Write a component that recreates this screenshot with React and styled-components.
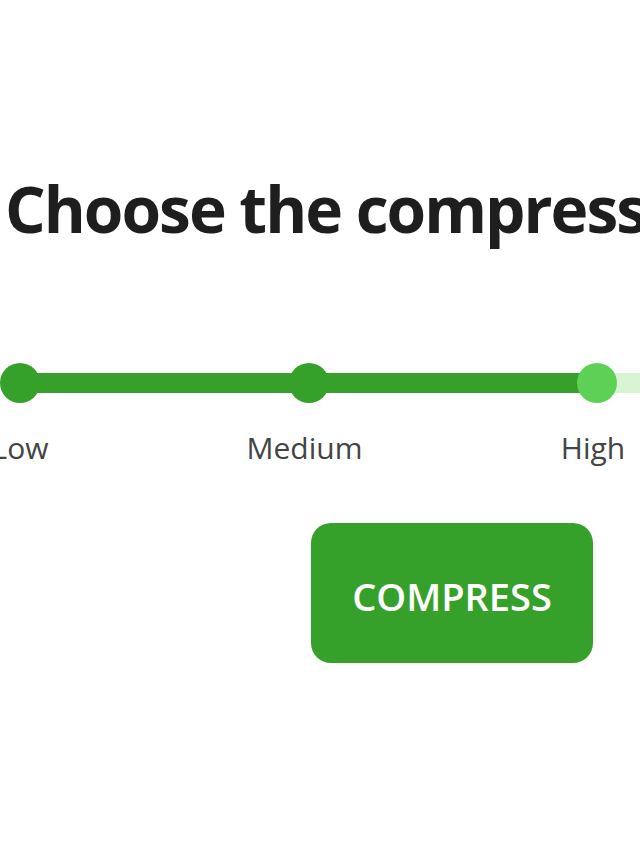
import React from "react";
import styled, { createGlobalStyle } from "styled-components";

const Global = createGlobalStyle`
  html, body { margin: 0; padding: 0; background: #ffffff; }
  body { font-family: "Open Sans", "Noto Sans", sans-serif; overflow: hidden; }
`;

const Page = styled.div`
  width: 640px;
  height: 853px;
  overflow: hidden;
  background: #ffffff;
  padding-top: 169px;
  box-sizing: border-box;
`;

const Heading = styled.h1`
  margin: 0 0 0 5px;
  font-size: 64px;
  line-height: 80px;
  font-weight: 700;
  color: #1e1e1e;
  white-space: nowrap;
  letter-spacing: -2px;
`;

const Slider = styled.div`
  position: relative;
  margin-top: 114px;
  margin-left: -60px;
  display: flex;
  gap: 128.5px;
`;

const Track = styled.div`
  position: absolute;
  left: 80px;
  right: -400px;
  top: 10px;
  height: 20px;
  background: linear-gradient(
    to right,
    #35a12a 0,
    #35a12a 577px,
    #d8f5d3 577px,
    #d8f5d3 100%
  );
`;

const Stop = styled.div`
  position: relative;
  width: 160px;
  flex: none;
  display: flex;
  flex-direction: column;
  align-items: center;
`;

const Dot = styled.div`
  width: 40px;
  height: 40px;
  border-radius: 50%;
  background: ${(p) => (p.$active ? "#5dd156" : "#35a12a")};
`;

const Label = styled.div`
  margin-top: 25px;
  margin-right: ${(p) => (p.$shift ? "8px" : "0")};
  font-size: 30px;
  line-height: 40px;
  color: #444444;
  white-space: nowrap;
`;

const ButtonRow = styled.div`
  margin-top: 55px;
  padding-left: 311px;
`;

const Button = styled.button`
  width: 282px;
  height: 140px;
  border: none;
  border-radius: 20px;
  background: #36a12a;
  color: #ffffff;
  font-family: "Open Sans", "Noto Sans", sans-serif;
  font-size: 38px;
  font-weight: 600;
  letter-spacing: 0;
  padding: 6px 0 0 0;
  cursor: pointer;
`;

const stops = [
  { label: "Low" },
  { label: "Medium", shift: true },
  { label: "High", active: true, shift: true },
  { label: "Max" },
];

export default function App() {
  return (
    <>
      <Global />
      <Page>
        <Heading>Choose the compression level</Heading>
        <Slider>
          <Track />
          {stops.map((s) => (
            <Stop key={s.label}>
              <Dot $active={s.active} />
              <Label $shift={s.shift}>{s.label}</Label>
            </Stop>
          ))}
        </Slider>
        <ButtonRow>
          <Button>COMPRESS</Button>
        </ButtonRow>
      </Page>
    </>
  );
}
